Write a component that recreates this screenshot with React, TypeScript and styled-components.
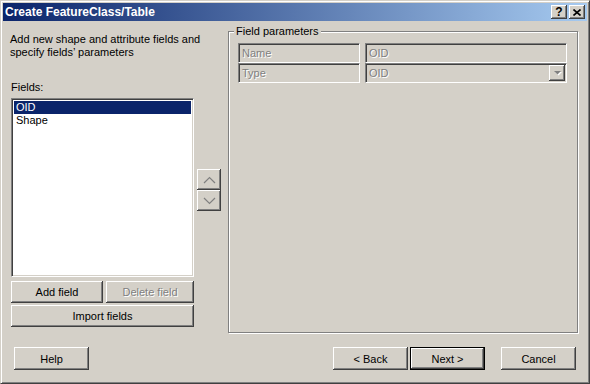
import React from "react";
import styled, { createGlobalStyle, css } from "styled-components";

// Classic Windows palette
const colors = {
  face: "#D4D0C8",
  shadow: "#808080",
  dark: "#404040",
  light: "#FFFFFF",
  titleStart: "#0A246A",
  titleEnd: "#A6CAF0",
  select: "#0A246A",
};

const GlobalStyle = createGlobalStyle`
  html, body {
    margin: 0;
    padding: 0;
    background: ${colors.face};
  }
  body {
    font-family: "Liberation Sans", Arial, sans-serif;
    font-size: 11px;
    color: #000;
  }
`;

const raised = css`
  border: none;
  background: ${colors.face};
  box-shadow: inset -1px -1px 0 ${colors.dark}, inset 1px 1px 0 ${colors.light},
    inset -2px -2px 0 ${colors.shadow};
`;

const sunken = css`
  border: 1px solid;
  border-color: ${colors.shadow} ${colors.light} ${colors.light} ${colors.shadow};
  box-shadow: inset 1px 1px 0 ${colors.dark}, inset -1px -1px 0 ${colors.face};
`;

const disabledText = css`
  color: ${colors.shadow};
  text-shadow: 1px 1px 0 ${colors.light};
`;

const Window = styled.div`
  width: 590px;
  height: 384px;
  box-sizing: border-box;
  border: 1px solid;
  border-color: ${colors.face} ${colors.dark} ${colors.dark} ${colors.face};
  box-shadow: inset 1px 1px 0 ${colors.light}, inset -1px -1px 0 ${colors.shadow};
  padding: 2px;
  display: flex;
  flex-direction: column;
  background: ${colors.face};
`;

const TitleBar = styled.div`
  height: 18px;
  flex: none;
  display: flex;
  align-items: center;
  padding: 0 2px 0 2px;
  background: linear-gradient(to right, ${colors.titleStart}, ${colors.titleEnd});
`;

const Title = styled.div`
  flex: 1;
  color: #fff;
  font-weight: bold;
  font-size: 12px;
  line-height: 18px;
  white-space: nowrap;
`;

const CaptionButton = styled.div`
  ${raised};
  width: 16px;
  height: 14px;
  margin-left: 2px;
  display: flex;
  align-items: center;
  justify-content: center;
  font-weight: bold;
  font-size: 12px;
  line-height: 14px;
  box-sizing: border-box;
`;

const Body = styled.div`
  flex: 1;
  display: flex;
  flex-direction: column;
  padding: 10px 9px 0 8px;
`;

const MainRow = styled.div`
  height: 302px;
  display: flex;
`;

const LeftColumn = styled.div`
  width: 183px;
  display: flex;
  flex-direction: column;
`;

const Intro = styled.div`
  margin: 2px 0 0 -1px;
  line-height: 13px;
  white-space: nowrap;
`;

const Label = styled.div`
  margin-top: 22px;
  line-height: 13px;
`;

const ListBox = styled.div`
  ${sunken};
  margin-top: 4px;
  height: 179px;
  box-sizing: border-box;
  background: #fff;
  padding: 2px;
`;

const ListItem = styled.div<{ $selected?: boolean }>`
  height: 13px;
  line-height: 13px;
  padding-left: 2px;
  background: ${(p) => (p.$selected ? colors.select : "transparent")};
  color: ${(p) => (p.$selected ? "#fff" : "#000")};
`;

const ButtonRow = styled.div`
  display: flex;
  gap: 3px;
  margin-top: 4px;
`;

const PushButton = styled.button<{ $width?: number; $default?: boolean; $height?: number }>`
  ${raised};
  width: ${(p) => (p.$width ? `${p.$width}px` : "100%")};
  height: ${(p) => p.$height ?? 22}px;
  box-sizing: border-box;
  padding: 0;
  font-family: "Liberation Sans", Arial, sans-serif;
  font-size: 11px;
  color: #000;
  flex: none;
  ${(p) =>
    p.$default &&
    css`
      border: 1px solid #000;
    `}
  &:disabled {
    ${disabledText};
  }
`;

const WideButton = styled(PushButton)`
  margin-top: 2px;
`;

const ArrowColumn = styled.div`
  width: 24px;
  margin: 138px 0 0 3px;
  display: flex;
  flex-direction: column;
`;

const ArrowButton = styled.div`
  ${raised};
  height: 21px;
  display: flex;
  align-items: center;
  justify-content: center;
`;

const GroupBox = styled.div`
  position: relative;
  width: 350px;
  margin-left: 7px;
  box-sizing: border-box;
  border: 1px solid ${colors.shadow};
  box-shadow: inset 1px 1px 0 ${colors.light}, 1px 1px 0 ${colors.light};
  padding: 11px 0 0 9px;
`;

const Legend = styled.span`
  position: absolute;
  top: -7px;
  left: 5px;
  padding: 0 2px;
  line-height: 13px;
  background: ${colors.face};
`;

const ParamGrid = styled.div`
  display: grid;
  grid-template-columns: 122px 202px;
  grid-auto-rows: 20px;
  column-gap: 5px;
`;

const Cell = styled.div`
  ${sunken};
  ${disabledText};
  box-sizing: border-box;
  display: flex;
  align-items: center;
  padding: 2px 1px 2px 3px;
  line-height: 13px;
  background: ${colors.face};
`;

const CellText = styled.span`
  flex: 1;
`;

const DropButton = styled.div`
  ${raised};
  width: 16px;
  height: 16px;
  display: flex;
  align-items: center;
  justify-content: center;
`;

const Footer = styled.div`
  margin-top: 14px;
  display: flex;
  padding: 0 2px 0 3px;
`;

const Spacer = styled.div`
  flex: 1;
`;

const Gap = styled.div<{ $w: number }>`
  width: ${(p) => p.$w}px;
  flex: none;
`;

const Chevron = ({ up }: { up?: boolean }) => (
  <svg width="13" height="8" viewBox="0 0 13 8">
    <polyline
      points={up ? "1,7 6.5,1.5 12,7" : "1,1 6.5,6.5 12,1"}
      fill="none"
      stroke={colors.shadow}
      strokeWidth="1.2"
    />
  </svg>
);

const DownTriangle = () => (
  <svg width="9" height="6" viewBox="0 0 9 6">
    <polygon points="2,2 9,2 5.5,5.5" fill={colors.light} />
    <polygon points="1,1 8,1 4.5,4.5" fill={colors.shadow} />
  </svg>
);

const CloseGlyph = () => (
  <svg width="8" height="7" viewBox="0 0 8 7">
    <path d="M0.5 0.5 L7.5 6.5 M7.5 0.5 L0.5 6.5" stroke="#000" strokeWidth="1.6" />
  </svg>
);

const App = () => {
  return (
    <>
      <GlobalStyle />
      <Window>
        <TitleBar>
          <Title>Create FeatureClass/Table</Title>
          <CaptionButton>?</CaptionButton>
          <CaptionButton>
            <CloseGlyph />
          </CaptionButton>
        </TitleBar>
        <Body>
          <MainRow>
            <LeftColumn>
              <Intro>
                Add new shape and attribute fields and
                <br />
                specify fields’ parameters
              </Intro>
              <Label>Fields:</Label>
              <ListBox>
                <ListItem $selected>OID</ListItem>
                <ListItem>Shape</ListItem>
              </ListBox>
              <ButtonRow>
                <PushButton $width={92}>Add field</PushButton>
                <PushButton $width={88} disabled>
                  Delete field
                </PushButton>
              </ButtonRow>
              <WideButton>Import fields</WideButton>
            </LeftColumn>
            <ArrowColumn>
              <ArrowButton>
                <Chevron up />
              </ArrowButton>
              <ArrowButton>
                <Chevron />
              </ArrowButton>
            </ArrowColumn>
            <GroupBox>
              <Legend>Field parameters</Legend>
              <ParamGrid>
                <Cell>
                  <CellText>Name</CellText>
                </Cell>
                <Cell>
                  <CellText>OID</CellText>
                </Cell>
                <Cell>
                  <CellText>Type</CellText>
                </Cell>
                <Cell>
                  <CellText>OID</CellText>
                  <DropButton>
                    <DownTriangle />
                  </DropButton>
                </Cell>
              </ParamGrid>
            </GroupBox>
          </MainRow>
          <Footer>
            <PushButton $width={75} $height={23}>
              Help
            </PushButton>
            <Spacer />
            <PushButton $width={75} $height={23}>
              &lt; Back
            </PushButton>
            <Gap $w={2} />
            <PushButton $width={75} $height={23} $default>
              Next &gt;
            </PushButton>
            <Gap $w={16} />
            <PushButton $width={75} $height={23}>
              Cancel
            </PushButton>
          </Footer>
        </Body>
      </Window>
    </>
  );
};

export default App;
